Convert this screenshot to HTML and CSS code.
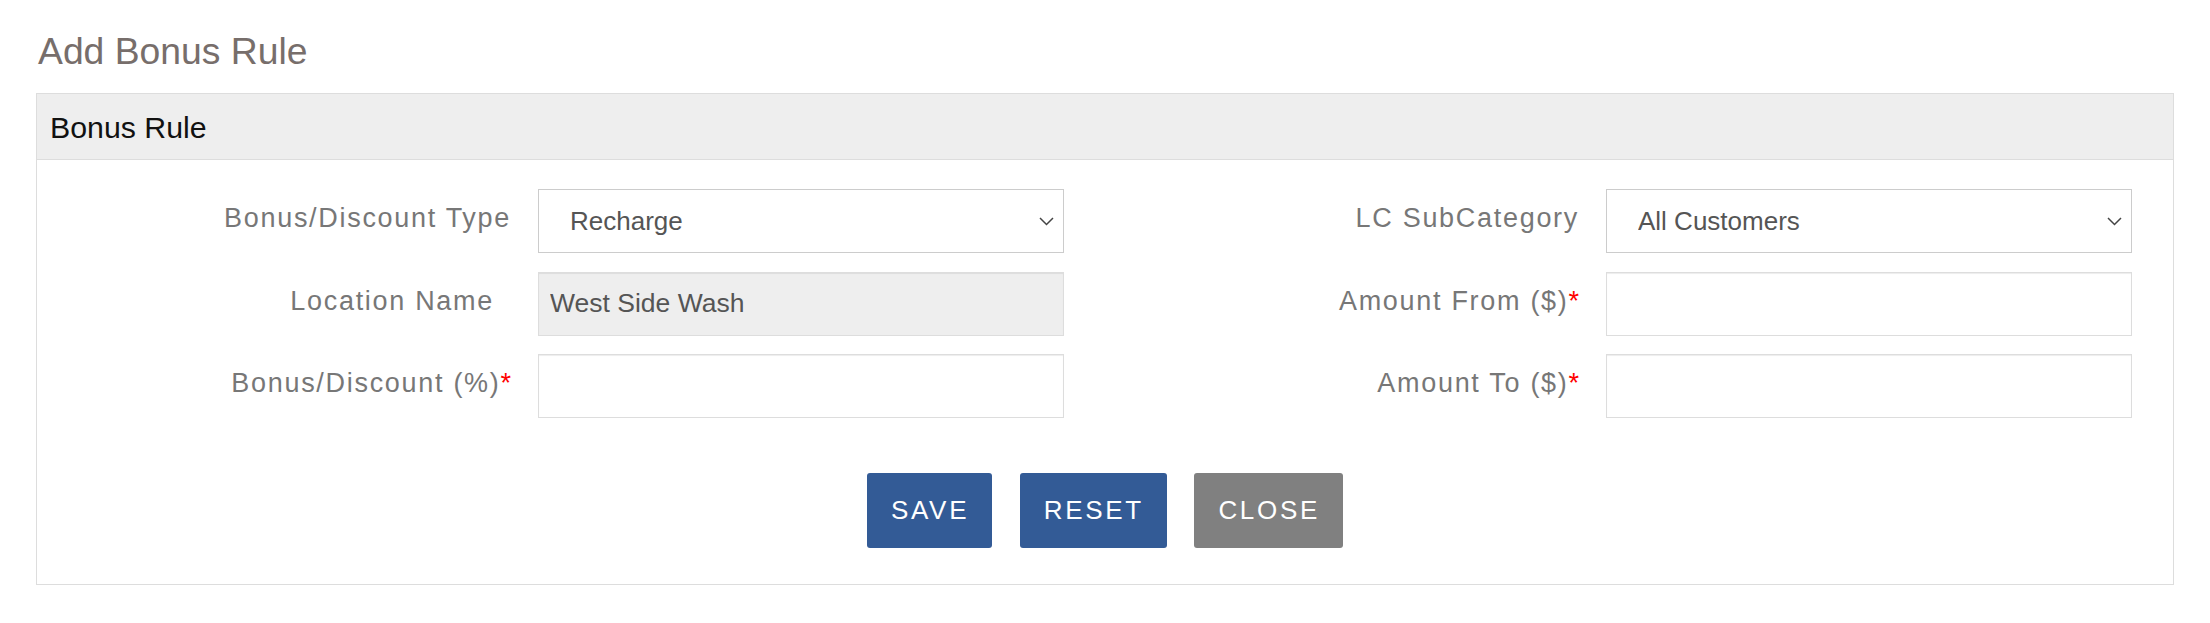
FILE: index.html
```html
<!DOCTYPE html>
<html lang="en">
<head>
<meta charset="utf-8">
<title>Add Bonus Rule</title>
<link rel="stylesheet" href="styles.css">
</head>
<body>
<div class="page">
  <h1 class="page-title">Add Bonus Rule</h1>
  <div class="panel">
    <div class="panel-heading">Bonus Rule</div>
    <div class="panel-body">
      <div class="form-grid">
        <div class="form-col">
          <div class="field">
            <label class="field-label">Bonus/Discount Type</label>
            <div class="select-wrap">
              <select class="control select"><option>Recharge</option></select>
              <svg class="chev" width="15" height="9" viewBox="0 0 15 9"><polyline points="1,1 7.5,7.5 14,1" fill="none" stroke="#444" stroke-width="1.5"/></svg>
            </div>
          </div>
          <div class="field">
            <label class="field-label field-label-pad">Location Name</label>
            <input class="control readonly" type="text" value="West Side Wash" readonly>
          </div>
          <div class="field">
            <label class="field-label">Bonus/Discount (%)<span class="req">*</span></label>
            <input class="control" type="text">
          </div>
        </div>
        <div class="form-col">
          <div class="field">
            <label class="field-label">LC SubCategory</label>
            <div class="select-wrap">
              <select class="control select"><option>All Customers</option></select>
              <svg class="chev" width="15" height="9" viewBox="0 0 15 9"><polyline points="1,1 7.5,7.5 14,1" fill="none" stroke="#444" stroke-width="1.5"/></svg>
            </div>
          </div>
          <div class="field">
            <label class="field-label">Amount From ($)<span class="req">*</span></label>
            <input class="control" type="text">
          </div>
          <div class="field">
            <label class="field-label">Amount To ($)<span class="req">*</span></label>
            <input class="control" type="text">
          </div>
        </div>
      </div>
      <div class="actions">
        <button class="btn btn-primary" type="button">Save</button>
        <button class="btn btn-primary" type="button">Reset</button>
        <button class="btn btn-default" type="button">Close</button>
      </div>
    </div>
  </div>
</div>
</body>
</html>
```

FILE: styles.css
```css
html, body {
  margin: 0;
  padding: 0;
  background: #ffffff;
}

body {
  font-family: "Liberation Sans", Arial, sans-serif;
}

.page {
  padding: 31px 36px 0 36px;
}

.page-title {
  margin: 0 0 22px 2px;
  font-size: 37.3px;
  line-height: 40px;
  font-weight: normal;
  color: #776e6b;
}

.panel {
  border: 1px solid #dddddd;
  background: #ffffff;
}

.panel-heading {
  background: #eeeeee;
  border-bottom: 1px solid #dddddd;
  padding: 17px 13px 15px 13px;
  font-size: 30.3px;
  line-height: 33px;
  color: #111111;
}

.panel-body {
  padding: 29px 0 36px 0;
}

.form-grid {
  display: grid;
  grid-template-columns: 1fr 1fr;
}

.form-col {
  display: flex;
  flex-direction: column;
  gap: 18.5px;
}

.field {
  display: grid;
  grid-template-columns: 1fr 526px;
  column-gap: 27px;
  padding-right: 41px;
  align-items: start;
}

.field-label {
  text-align: right;
  font-size: 27px;
  line-height: 36px;
  padding-top: 11px;
  letter-spacing: 1.7px;
  color: #777777;
}

.field-label-pad {
  padding-right: 17px;
}

.req {
  color: #ff0000;
  letter-spacing: 0;
}

.control {
  box-sizing: border-box;
  width: 100%;
  height: 64px;
  margin: 0;
  border: 1px solid #dddddd;
  border-radius: 0;
  box-shadow: inset 0 1px 1px rgba(0, 0, 0, 0.075);
  background: #ffffff;
  font-family: "Liberation Sans", Arial, sans-serif;
  font-size: 26.5px;
  color: #555555;
  padding: 0 11px;
  outline: none;
}

.readonly {
  background: #eeeeee;
}

.select-wrap {
  position: relative;
}

.select {
  -webkit-appearance: none;
  appearance: none;
  border-color: #cccccc;
  box-shadow: none;
  padding-left: 31px;
  font-size: 26px;
}

.chev {
  position: absolute;
  right: 10px;
  top: 28px;
  pointer-events: none;
}

.actions {
  display: flex;
  justify-content: center;
  gap: 27.5px;
  margin-top: 55px;
}

.btn {
  height: 75px;
  padding: 0 23px 0 24px;
  border: none;
  border-radius: 3px;
  font-family: "Liberation Sans", Arial, sans-serif;
  font-size: 26px;
  letter-spacing: 2.7px;
  text-transform: uppercase;
  color: #ffffff;
  cursor: pointer;
}

.btn-primary {
  background: #335b96;
}

.btn-default {
  background: #808080;
}
```
